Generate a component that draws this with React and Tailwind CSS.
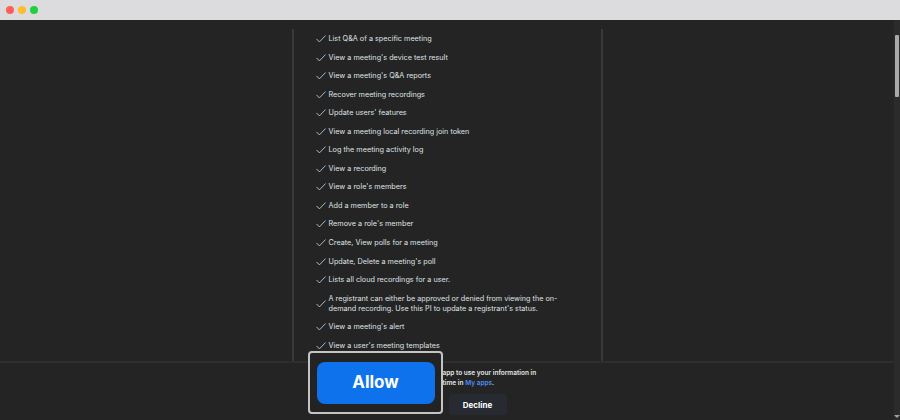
import React from "react";

const items = [
  ["List Q&A of a specific meeting"],
  ["View a meeting's device test result"],
  ["View a meeting's Q&A reports"],
  ["Recover meeting recordings"],
  ["Update users' features"],
  ["View a meeting local recording join token"],
  ["Log the meeting activity log"],
  ["View a recording"],
  ["View a role's members"],
  ["Add a member to a role"],
  ["Remove a role's member"],
  ["Create, View polls for a meeting"],
  ["Update, Delete a meeting's poll"],
  ["Lists all cloud recordings for a user."],
  [
    "A registrant can either be approved or denied from viewing the on-",
    "demand recording. Use this PI to update a registrant's status.",
  ],
  ["View a meeting's alert"],
  ["View a user's meeting templates"],
  ["View a meeting's summary"],
  ["View users' settings"],
];

function Check() {
  return (
    <svg width="10" height="8" viewBox="0 0 10 8" className="shrink-0">
      <path d="M0.8 4.2 L3.4 6.9 L9.3 0.8" fill="none" stroke="#c4c7cc" strokeWidth="0.9" strokeLinecap="round" strokeLinejoin="round" />
    </svg>
  );
}

function Line({ prefix, children }) {
  return (
    <div className="flex whitespace-nowrap">
      <span className="w-[127px] shrink-0 overflow-hidden flex justify-end">
        <span className="shrink-0">{prefix}&nbsp;</span>
      </span>
      <span>{children}</span>
    </div>
  );
}

export default function App() {
  return (
    <div
      className="w-[900px] h-[420px] flex flex-col bg-[#242424] overflow-hidden relative"
      style={{ fontFamily: "Inter, 'Noto Sans', sans-serif" }}
    >
      <div className="h-[20px] bg-[#dcdcde] flex items-center gap-[4px] pl-[6px] shrink-0">
        <span className="w-[8px] h-[8px] rounded-full bg-[#ff5f57]" />
        <span className="w-[8px] h-[8px] rounded-full bg-[#febc2e]" />
        <span className="w-[8px] h-[8px] rounded-full bg-[#1fd03f]" />
      </div>
      <div className="flex flex-1 min-h-0">
        <div className="flex-1 flex flex-col min-w-0">
          <div className="flex-1 min-h-0 overflow-hidden flex justify-center pt-[9px]">
            <div className="w-[311px] border-l-2 border-r-2 border-[#393939] pl-[22px] pt-[5px] flex flex-col gap-[8.55px]">
              {items.map((lines, i) => (
                <div key={i} className="flex items-center gap-[3px] text-[7.25px] leading-[10px] text-[#dfe1e4]">
                  <Check />
                  <div className="flex flex-col">
                    {lines.map((l, j) => (
                      <span key={j} className="whitespace-nowrap">{l}</span>
                    ))}
                  </div>
                </div>
              ))}
            </div>
          </div>
          <div className="h-[59px] shrink-0 border-t-2 border-[#2e2e2e] flex justify-center">
            <div className="w-[311px] pl-[24px] pt-[6px] flex flex-col">
              <div className="text-[6.5px] leading-[9.5px] font-semibold text-[#e4e4e4]">
                <Line prefix="By clicking Allow, you give access to this">app to use your information in</Line>
                <Line prefix="accordance with its terms. Remove at any">
                  time in <span className="text-[#4a8df5]">My apps</span>.
                </Line>
              </div>
              <div className="flex gap-[8px] mt-[6px] pl-[133px]">
                <button className="w-[58px] h-[21px] rounded-[4px] bg-[#272b31] text-white text-[8px] font-bold">
                  Decline
                </button>
              </div>
            </div>
          </div>
        </div>
        <div className="w-[6px] bg-[#2b2b2b] flex flex-col items-center pt-[15px] relative">
          <div className="w-[4px] h-[62px] bg-[#a9a9a9] rounded-[1px]" />
          <div className="absolute bottom-[2px] w-0 h-0 border-l-[3px] border-r-[3px] border-t-[3px] border-l-transparent border-r-transparent border-t-[#a0a0a0]" />
        </div>
      </div>
      <div className="absolute left-[308px] top-[351px] w-[135px] h-[63px] rounded-[4px] border-2 border-[#c4c4c4] bg-[#232323] flex items-center justify-center">
        <div className="w-[118px] h-[42px] rounded-[8px] bg-[#0e72ed] flex items-center justify-center text-white text-[17px] font-bold">
          Allow
        </div>
      </div>
    </div>
  );
}
